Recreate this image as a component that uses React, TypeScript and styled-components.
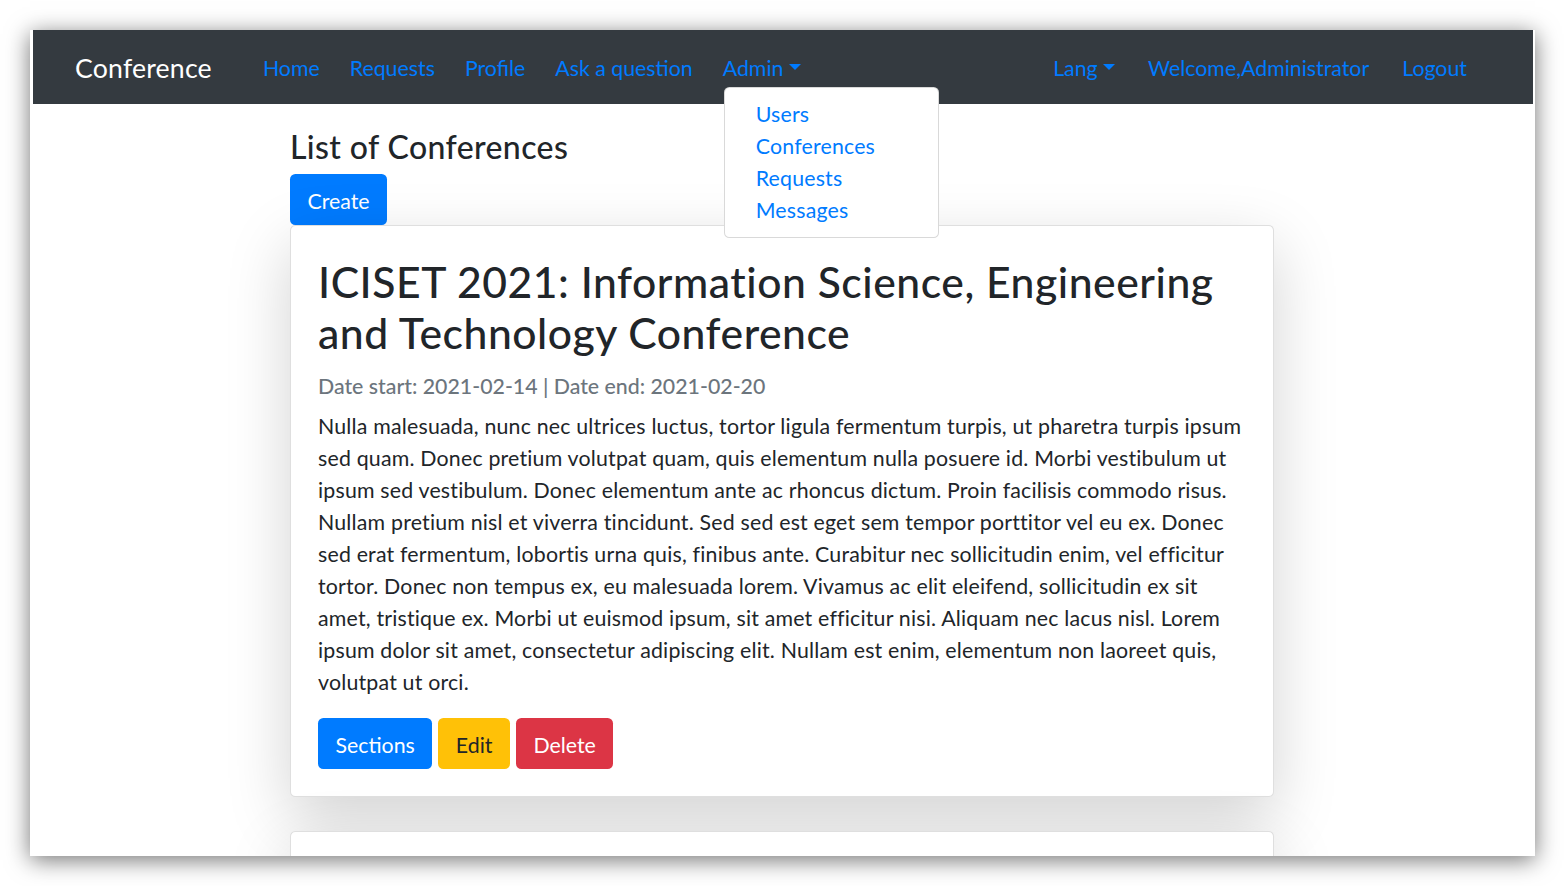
import React from "react";
import styled, { createGlobalStyle } from "styled-components";

const GlobalStyle = createGlobalStyle`
  html, body { margin: 0; padding: 0; background: #ffffff; }
  body {
    font-family: Lato, "Liberation Sans", sans-serif;
    letter-spacing: 0.012em;
    color: #212529;
  }
  * { box-sizing: border-box; }
`;

const Stage = styled.div`
  width: 1564px;
  height: 886px;
  padding: 30px 29px 30px 30px;
`;

const Window = styled.div`
  width: 1505px;
  height: 826px;
  background: #ffffff;
  padding: 0 2px 0 3px;
  overflow: hidden;
  box-shadow: 0 4px 22px rgba(0, 0, 0, 0.55);
  display: flex;
  flex-direction: column;
`;

const Navbar = styled.nav`
  flex: 0 0 74px;
  height: 74px;
  background: #343a40;
  display: flex;
  align-items: center;
  padding: 1px 66px 0 42px;
  position: relative;
  z-index: 5;
`;

const Brand = styled.a`
  font-size: 26.67px;
  line-height: 40px;
  color: #ffffff;
  margin-right: 51px;
  text-decoration: none;
`;

const NavList = styled.div<{ $right?: boolean }>`
  display: flex;
  align-items: center;
  gap: ${(p) => (p.$right ? "33px" : "30px")};
  margin-left: ${(p) => (p.$right ? "auto" : "0")};
`;

const NavItem = styled.div`
  position: relative;
  height: 32px;
`;

const NavLink = styled.a<{ $caret?: boolean }>`
  display: inline-block;
  font-size: 21.33px;
  line-height: 32px;
  letter-spacing: 0;
  color: #007bff;
  text-decoration: none;
  white-space: nowrap;
  &::after {
    content: ${(p) => (p.$caret ? '""' : "none")};
    display: inline-block;
    margin-left: 5.4px;
    vertical-align: 5.4px;
    border-top: 6.4px solid #007bff;
    border-left: 6.4px solid transparent;
    border-right: 6.4px solid transparent;
    border-bottom: 0;
  }
`;

const Menu = styled.div`
  position: absolute;
  left: 1px;
  top: 35px;
  width: 215px;
  padding: 10.67px 0;
  background: #ffffff;
  border: 1px solid rgba(0, 0, 0, 0.15);
  border-radius: 5.33px;
  display: flex;
  flex-direction: column;
`;

const MenuItem = styled.a`
  display: block;
  padding: 0 31px;
  font-size: 21.33px;
  line-height: 32px;
  color: #007bff;
  text-decoration: none;
  white-space: nowrap;
`;

const Main = styled.main`
  width: 984px;
  margin: 0 0 0 257px;
  padding-top: 24px;
  display: flex;
  flex-direction: column;
  align-items: flex-start;
`;

const PageTitle = styled.h3`
  margin: 0 0 7.6px;
  font-size: 32px;
  font-weight: 500;
  line-height: 38.4px;
  letter-spacing: 0.012em;
  color: #212529;
`;

const Button = styled.a<{ $variant: "primary" | "warning" | "danger" }>`
  display: inline-flex;
  align-items: center;
  justify-content: center;
  height: 51px;
  padding: 2px 17.5px 0;
  font-size: 21.33px;
  line-height: 32px;
  letter-spacing: 0;
  border-radius: 5.33px;
  text-decoration: none;
  white-space: nowrap;
  background: ${(p) =>
    p.$variant === "primary" ? "#007bff" : p.$variant === "warning" ? "#ffc107" : "#dc3545"};
  color: ${(p) => (p.$variant === "warning" ? "#212529" : "#ffffff")};
`;

const Card = styled.section<{ $gap?: number }>`
  width: 984px;
  margin-bottom: ${(p) => p.$gap ?? 0}px;
  background: #ffffff;
  border: 1px solid rgba(0, 0, 0, 0.125);
  border-radius: 5.33px;
  box-shadow: 0 21px 64px rgba(0, 0, 0, 0.175);
  padding: 30px 27px 27px;
  min-height: 60px;
`;

const CardTitle = styled.h2`
  margin: 0 0 16px;
  font-size: 42.67px;
  font-weight: 500;
  line-height: 51.2px;
  letter-spacing: 0.0125em;
  color: #212529;
`;

const CardSubtitle = styled.h6`
  margin: 0 0 10px;
  font-size: 21.33px;
  font-weight: 500;
  line-height: 25.6px;
  letter-spacing: 0;
  color: #6c757d;
`;

const CardText = styled.p`
  margin: 0 0 20px;
  font-size: 21.33px;
  line-height: 32px;
  color: #212529;
`;

const Actions = styled.div`
  display: flex;
  gap: 6px;
`;

const leftLinks = ["Home", "Requests", "Profile", "Ask a question"];
const adminItems = ["Users", "Conferences", "Requests", "Messages"];

export default function App() {
  return (
    <>
      <GlobalStyle />
      <Stage>
        <Window>
          <Navbar>
            <Brand href="#">Conference</Brand>
            <NavList>
              {leftLinks.map((l) => (
                <NavItem key={l}>
                  <NavLink href="#">{l}</NavLink>
                </NavItem>
              ))}
              <NavItem>
                <NavLink href="#" $caret>
                  Admin
                </NavLink>
                <Menu>
                  {adminItems.map((m) => (
                    <MenuItem key={m} href="#">
                      {m}
                    </MenuItem>
                  ))}
                </Menu>
              </NavItem>
            </NavList>
            <NavList $right>
              <NavItem>
                <NavLink href="#" $caret>
                  Lang
                </NavLink>
              </NavItem>
              <NavItem>
                <NavLink href="#">Welcome,Administrator</NavLink>
              </NavItem>
              <NavItem>
                <NavLink href="#">Logout</NavLink>
              </NavItem>
            </NavList>
          </Navbar>
          <Main>
            <PageTitle>List of Conferences</PageTitle>
            <Button $variant="primary" href="#">
              Create
            </Button>
            <Card $gap={34}>
              <CardTitle>ICISET 2021: Information Science, Engineering and Technology Conference</CardTitle>
              <CardSubtitle>Date start: 2021-02-14 | Date end: 2021-02-20</CardSubtitle>
              <CardText>
                Nulla malesuada, nunc nec ultrices luctus, tortor ligula fermentum turpis, ut pharetra turpis ipsum
                sed quam. Donec pretium volutpat quam, quis elementum nulla posuere id. Morbi vestibulum ut ipsum sed
                vestibulum. Donec elementum ante ac rhoncus dictum. Proin facilisis commodo risus. Nullam pretium nisl
                et viverra tincidunt. Sed sed est eget sem tempor porttitor vel eu ex. Donec sed erat fermentum,
                lobortis urna quis, finibus ante. Curabitur nec sollicitudin enim, vel efficitur tortor. Donec non
                tempus ex, eu malesuada lorem. Vivamus ac elit eleifend, sollicitudin ex sit amet, tristique ex. Morbi
                ut euismod ipsum, sit amet efficitur nisi. Aliquam nec lacus nisl. Lorem ipsum dolor sit amet,
                consectetur adipiscing elit. Nullam est enim, elementum non laoreet quis, volutpat ut orci.
              </CardText>
              <Actions>
                <Button $variant="primary" href="#">
                  Sections
                </Button>
                <Button $variant="warning" href="#">
                  Edit
                </Button>
                <Button $variant="danger" href="#">
                  Delete
                </Button>
              </Actions>
            </Card>
            <Card />
          </Main>
        </Window>
      </Stage>
    </>
  );
}
